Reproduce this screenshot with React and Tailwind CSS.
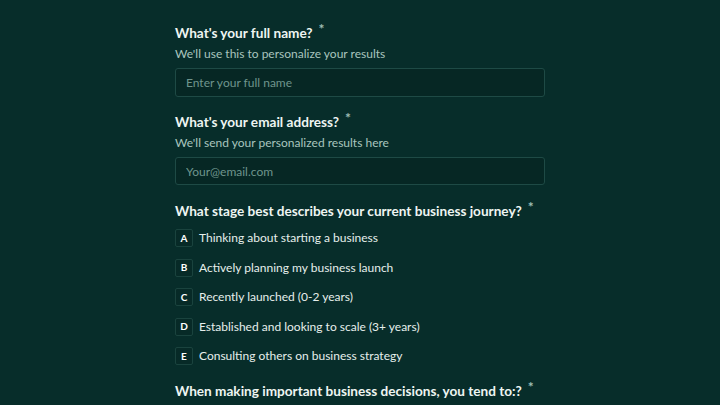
import { useState } from 'react'

const stages = [
  { key: 'A', label: 'Thinking about starting a business' },
  { key: 'B', label: 'Actively planning my business launch' },
  { key: 'C', label: 'Recently launched (0-2 years)' },
  { key: 'D', label: 'Established and looking to scale (3+ years)' },
  { key: 'E', label: 'Consulting others on business strategy' },
]

function Question({ children }) {
  return (
    <h2 className="whitespace-nowrap text-[13.6px] font-bold text-[#eef5f2] leading-[18px]">
      {children}
      <span className="relative -top-[4px] ml-1.5 text-[14px] leading-none text-[#9fbdb5]">*</span>
    </h2>
  )
}

export default function App() {
  const [name, setName] = useState('')
  const [email, setEmail] = useState('')
  const [stage, setStage] = useState(null)

  return (
    <div
      className="h-[405px] overflow-hidden bg-[#072d2a] text-white"
      style={{ fontFamily: 'Lato, "Noto Sans", sans-serif' }}
    >
      <div className="mx-auto w-[370px] pt-[24px]">
        {/* name */}
        <div>
          <Question>What's your full name?</Question>
          <p className="mt-[4px] text-[12px] leading-4 text-[#a9c5be]">
            We'll use this to personalize your results
          </p>
          <input
            value={name}
            onChange={(e) => setName(e.target.value)}
            placeholder="Enter your full name"
            className="mt-[6px] h-[29px] w-full rounded-[3px] border border-[#1e4a45] bg-[#062724] px-[10px] text-[12px] text-white placeholder:text-[#6f958d] outline-none"
          />
        </div>

        {/* email */}
        <div className="mt-[16px]">
          <Question>What's your email address?</Question>
          <p className="mt-[4px] text-[12px] leading-4 text-[#a9c5be]">
            We'll send your personalized results here
          </p>
          <input
            value={email}
            onChange={(e) => setEmail(e.target.value)}
            placeholder="Your@email.com"
            className="mt-[6px] h-[28px] w-full rounded-[3px] border border-[#1e4a45] bg-[#062724] px-[10px] text-[12px] text-white placeholder:text-[#6f958d] outline-none"
          />
        </div>

        {/* stage */}
        <div className="mt-[17px]">
          <Question>What stage best describes your current business journey?</Question>
          <div className="mt-[9px] flex flex-col gap-[11.5px]">
            {stages.map((s) => (
              <button
                key={s.key}
                onClick={() => setStage(s.key)}
                className="flex items-center gap-[6px] text-left"
              >
                <span
                  className={
                    'flex h-[18px] w-[18px] items-center justify-center rounded-[2px] border text-[10px] font-bold ' +
                    (stage === s.key
                      ? 'border-[#9fbdb5] bg-[#1e4a45]'
                      : 'border-[#1a433e] bg-[#072a27]')
                  }
                >
                  {s.key}
                </span>
                <span className="text-[12px] leading-4 text-[#e6efec]">{s.label}</span>
              </button>
            ))}
          </div>
        </div>

        {/* decisions */}
        <div className="mt-[17px]">
          <Question>When making important business decisions, you tend to:?</Question>
        </div>
      </div>
    </div>
  )
}
